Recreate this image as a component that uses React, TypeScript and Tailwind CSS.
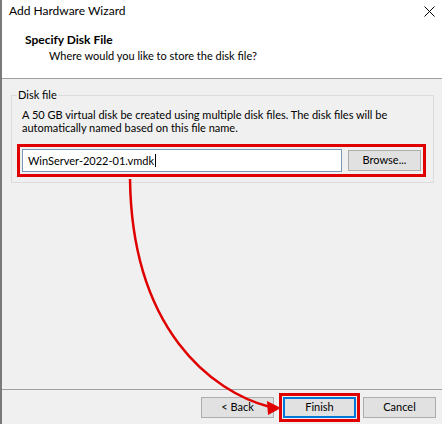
import React from "react"

function WinButton({ label, primary }: { label: string; primary?: boolean }) {
    return (
        <button
            className={
                primary
                    ? "w-[73px] h-[21px] bg-[#e1e1e1] border-2 border-[#0078d7] text-[11px] text-black outline-[3px] outline-solid outline-[#e00000] outline-offset-[1px]"
                    : "w-[73px] h-[21px] bg-[#e1e1e1] border border-[#adadad] text-[11px] text-black"
            }
        >
            {label}
        </button>
    )
}

export default function App() {
    return (
        <div
            className="relative w-[442px] h-[424px] flex flex-col bg-[#f0f0f0] border-l-2 border-[#7a7a7a] text-[11px] text-black overflow-hidden"
            style={{ fontFamily: 'Lato, "Noto Sans", sans-serif' }}
        >
            {/* header */}
            <div className="h-[79px] bg-white border-b border-[#a0a0a0] shrink-0">
                <div className="h-[22px] flex items-center justify-between pl-[7px] pr-[7px]">
                    <span className="leading-[16px] text-[12px]">Add Hardware Wizard</span>
                    <svg width="11" height="11" viewBox="0 0 11 11">
                        <path d="M0.5 0.5 L10.5 10.5 M10.5 0.5 L0.5 10.5" stroke="#000" strokeWidth="1" />
                    </svg>
                </div>
                <div className="mt-[10px] pl-[23px] font-bold text-[12px] leading-[16px]">Specify Disk File</div>
                <div className="pl-[47px] leading-[16px]">Where would you like to store the disk file?</div>
            </div>

            {/* body */}
            <div className="flex-1 pt-[8px] pl-[9px] pr-[8px]">
                <fieldset className="border border-[#dcdcdc] px-[5px] pb-[5px]">
                    <legend className="px-[1px] leading-[16px]">Disk file</legend>
                    <p className="mt-[5px] pl-[5px] leading-[13px] whitespace-nowrap">
                        A 50 GB virtual disk be created using multiple disk files. The disk files will be
                        <br />
                        automatically named based on this file name.
                    </p>
                    <div className="mt-[10px] mr-[2px] border-[3px] border-[#e00000] p-[2px] flex items-center gap-[6px]">
                        <div className="w-[320px] h-[23px] bg-white border border-[#7a98b8] flex items-center pl-[5px]">
                            <span className="leading-[16px]">WinServer-2022-01.vmdk</span>
                            <span className="w-px h-[13px] bg-black ml-[1px]" />
                        </div>
                        <WinButton label="Browse..." />
                    </div>
                </fieldset>
            </div>

            {/* footer */}
            <div className="h-[35px] shrink-0 border-t border-[#a0a0a0] flex items-center justify-end pr-[6px] gap-[7px]">
                <div className="mr-[2px]">
                    <WinButton label="< Back" />
                </div>
                <WinButton label="Finish" primary />
                <WinButton label="Cancel" />
            </div>

            {/* annotation arrow */}
            <svg className="absolute inset-0 pointer-events-none" width="442" height="424" viewBox="0 0 442 424">
                <path d="M128 179 C 130 330, 210 392, 268 407" fill="none" stroke="#e00000" strokeWidth="2.5" />
                <polygon points="279,408 265,401 266,415" fill="#e00000" />
            </svg>
        </div>
    )
}
